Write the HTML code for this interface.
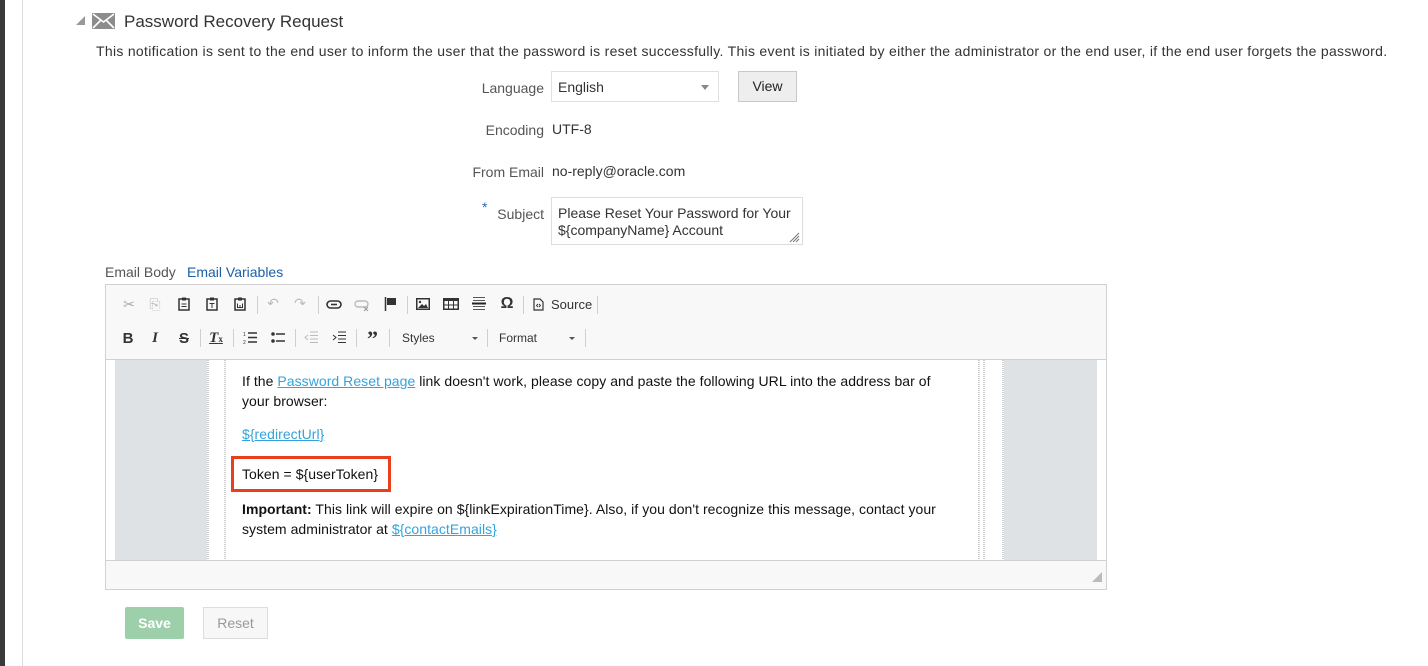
<!DOCTYPE html>
<html><head><style>
*{box-sizing:border-box;margin:0;padding:0}
body{width:1428px;height:666px;background:#fff;font-family:"Liberation Sans",Arial,sans-serif;color:#333;position:relative;overflow:hidden}
.a{position:absolute;white-space:nowrap}
.lbl{font-size:14px;color:#555;text-align:right;width:120px}
.val{font-size:14px;color:#333}
.ic{position:absolute;color:#333;font-size:14px;text-align:center;width:18px}
.sep{position:absolute;width:1px;height:18px;background:#d0d0d0}
.dl{position:absolute;width:2px;top:360px;height:200px;background-image:repeating-linear-gradient(#ccc 0 1px,#fff 1px 2px)}
.ct{position:absolute;font-size:14px;color:#111;left:242px;letter-spacing:0.05px}
.lk{color:#33a3dc;text-decoration:underline}
</style></head><body>
<div class="a" style="left:0;top:0;width:5px;height:666px;background:#3a3a3a"></div>
<div class="a" style="left:22px;top:0;width:1px;height:666px;background:#ddd"></div>
<div class="a" style="left:76px;top:16px;width:0;height:0;border-left:9px solid transparent;border-bottom:9px solid #999"></div>
<svg class="a" style="left:92px;top:13px" width="23" height="16" viewBox="0 0 23 16"><rect width="23" height="16" fill="#8c8c8c"/><path d="M1 1 L11.5 9 L22 1 M1 15 L8.5 7.5 M22 15 L14.5 7.5" stroke="#fff" stroke-width="1.6" fill="none"/></svg>
<div class="a" style="left:124px;top:12px;font-size:17px;color:#333">Password Recovery Request</div>
<div class="a" style="left:96px;top:43px;font-size:14px;color:#333;letter-spacing:0.3px">This notification is sent to the end user to inform the user that the password is reset successfully. This event is initiated by either the administrator or the end user, if the end user forgets the password.</div>

<div class="a lbl" style="left:424px;top:80px">Language</div>
<div class="a" style="left:551px;top:71px;width:168px;height:31px;border:1px solid #e0e0e0;background:#fff"></div>
<div class="a val" style="left:558px;top:79px">English</div>
<div class="a" style="left:701px;top:85px;border-left:4px solid transparent;border-right:4px solid transparent;border-top:5px solid #888"></div>
<div class="a" style="left:738px;top:71px;width:59px;height:31px;border:1px solid #c8c8c8;background:#eee;font-size:14px;color:#222;text-align:center;line-height:29px">View</div>
<div class="a lbl" style="left:424px;top:122px">Encoding</div>
<div class="a val" style="left:552px;top:121px">UTF-8</div>
<div class="a lbl" style="left:424px;top:164px">From Email</div>
<div class="a val" style="left:552px;top:163px">no-reply@oracle.com</div>
<div class="a" style="left:482px;top:199px;color:#2a6cc4;font-size:14px">*</div>
<div class="a lbl" style="left:424px;top:206px">Subject</div>
<div class="a" style="left:551px;top:197px;width:252px;height:48px;border:1px solid #ddd"></div>
<div class="a val" style="left:558px;top:205px;line-height:17px">Please Reset Your Password for Your<br>${companyName} Account</div>
<svg class="a" style="left:788px;top:231px" width="12" height="12"><path d="M11 2L2 11M11 5L5 11M11 8L8 11" stroke="#777" stroke-width="1"/></svg>

<div class="a" style="left:105px;top:264px;font-size:14px;color:#555">Email Body</div>
<div class="a" style="left:187px;top:264px;font-size:14px;color:#1a5fa8">Email Variables</div>

<div class="a" style="left:105px;top:284px;width:1002px;height:306px;border:1px solid #d1d1d1;background:#f8f8f8"></div>
<div class="a" style="left:106px;top:359px;width:1000px;height:1px;background:#d1d1d1"></div>
<div class="a" style="left:106px;top:360px;width:1000px;height:200px;background:#fff"></div>
<div class="a" style="left:106px;top:560px;width:1000px;height:1px;background:#d1d1d1"></div>
<div class="a" style="left:115px;top:360px;width:92px;height:200px;background:#dfe2e5"></div>
<div class="dl" style="left:207px"></div><div class="dl" style="left:224px"></div>
<div class="dl" style="left:978px"></div><div class="dl" style="left:983px"></div>
<div class="a" style="left:1004px;top:360px;width:93px;height:200px;background:#dfe2e5"></div>
<div class="dl" style="left:1002px"></div>
<svg class="a" style="left:1092px;top:572px" width="10" height="10"><path d="M10 0L10 10L0 10Z" fill="#bbb"/></svg>

<div class="ic" style="left:120px;top:296px;color:#aaa">✂</div>
<div class="ic" style="left:146px;top:296px;color:#bbb">⎘</div>
<svg class="a" style="left:178px;top:297px" width="12" height="14"><rect x="1" y="2" width="10" height="11" fill="none" stroke="#333" stroke-width="1.5"/><rect x="4" y="0.5" width="4" height="3" fill="#333"/><path d="M3.5 7h5M3.5 9.5h5" stroke="#333"/></svg>
<svg class="a" style="left:206px;top:297px" width="12" height="14"><rect x="1" y="2" width="10" height="11" fill="none" stroke="#333" stroke-width="1.5"/><rect x="4" y="0.5" width="4" height="3" fill="#333"/><path d="M3.5 6.5h5M6 6.5v4.5" stroke="#333"/></svg>
<svg class="a" style="left:234px;top:297px" width="12" height="14"><rect x="1" y="2" width="10" height="11" fill="none" stroke="#333" stroke-width="1.5"/><rect x="4" y="0.5" width="4" height="3" fill="#333"/><path d="M3.5 6.5v4h5v-4M6 8v2.5" stroke="#333" fill="none"/></svg>
<div class="sep" style="left:257px;top:296px"></div>
<div class="ic" style="left:264px;top:295px;color:#bbb">↶</div>
<div class="ic" style="left:291px;top:295px;color:#bbb">↷</div>
<div class="sep" style="left:318px;top:296px"></div>
<svg class="a" style="left:326px;top:300px" width="16" height="9"><rect x="1" y="1" width="14" height="7" rx="3.5" fill="none" stroke="#333" stroke-width="1.6"/><path d="M5 4.5h6" stroke="#333" stroke-width="1.6"/></svg>
<svg class="a" style="left:354px;top:300px" width="16" height="12"><rect x="1" y="1" width="13" height="6" rx="3" fill="none" stroke="#bbb" stroke-width="1.4"/><path d="M10 7l4 4M14 7l-4 4" stroke="#999"/></svg>
<svg class="a" style="left:384px;top:297px" width="13" height="14"><path d="M1.5 0v14" stroke="#333" stroke-width="1.5"/><path d="M3 1h9v7h-9z" fill="#333"/></svg>
<div class="sep" style="left:407px;top:296px"></div>
<svg class="a" style="left:416px;top:298px" width="14" height="12"><rect x="0.75" y="0.75" width="12.5" height="10.5" fill="none" stroke="#333" stroke-width="1.5"/><path d="M2 10l4-4 2 2 2-2 2 4z" fill="#333"/><circle cx="4" cy="4" r="1.2" fill="#333"/></svg>
<svg class="a" style="left:443px;top:298px" width="16" height="12"><rect x="0.75" y="0.75" width="14.5" height="10.5" fill="none" stroke="#333" stroke-width="1.5"/><rect x="0" y="0" width="16" height="3" fill="#333"/><path d="M5.5 3v8M10.5 3v8M1 7h14" stroke="#333"/></svg>
<svg class="a" style="left:472px;top:296px" width="14" height="16"><path d="M1 1.5h12M1 4.5h12M1 7.5h12M1 10.5h12M1 13.5h12" stroke="#555" stroke-width="1"/><path d="M0 7.5h14" stroke="#222" stroke-width="2"/></svg>
<div class="ic" style="left:498px;top:295px;font-size:16px;font-weight:bold">Ω</div>
<div class="sep" style="left:523px;top:296px"></div>
<svg class="a" style="left:533px;top:298px" width="11" height="13"><path d="M1 1h6l3 3v8H1z" fill="none" stroke="#333" stroke-width="1.2"/><path d="M5 6l-1.5 1.5L5 9M6 6l1.5 1.5L6 9" stroke="#333" fill="none" stroke-width="0.9"/></svg>
<div class="a" style="left:551px;top:297px;font-size:13px;color:#333">Source</div>
<div class="sep" style="left:597px;top:296px"></div>

<div class="ic" style="left:119px;top:330px;font-weight:bold;font-size:15px">B</div>
<div class="ic" style="left:146px;top:330px;font-weight:bold;font-style:italic;font-size:15px;font-family:'Liberation Serif',serif">I</div>
<div class="ic" style="left:175px;top:330px;font-weight:bold;font-size:15px;text-decoration:line-through">S</div>
<div class="sep" style="left:200px;top:329px"></div>
<div class="ic" style="left:207px;top:330px;font-style:italic;font-weight:bold;font-size:15px;text-decoration:underline;font-family:'Liberation Serif',serif">T<span style="font-size:9px;font-style:normal">x</span></div>
<div class="sep" style="left:233px;top:329px"></div>
<svg class="a" style="left:243px;top:331px" width="14" height="13"><path d="M5 2h9M5 6.5h9M5 11h9" stroke="#333" stroke-width="1.5"/><text x="0" y="5" font-size="5" fill="#333">1</text><text x="0" y="13" font-size="5" fill="#333">2</text></svg>
<svg class="a" style="left:271px;top:331px" width="14" height="13"><circle cx="2" cy="3" r="1.8" fill="#333"/><circle cx="2" cy="10" r="1.8" fill="#333"/><path d="M5 3h9M5 10h9" stroke="#333" stroke-width="1.5"/></svg>
<div class="sep" style="left:295px;top:329px"></div>
<svg class="a" style="left:304px;top:331px" width="14" height="13"><path d="M6 1h8M6 4.5h8M6 8h8M6 11.5h8" stroke="#bbb"/><path d="M4 4L1 6.5 4 9" stroke="#bbb" fill="none"/></svg>
<svg class="a" style="left:332px;top:331px" width="14" height="13"><path d="M6 1h8M6 4.5h8M6 8h8M6 11.5h8" stroke="#333"/><path d="M1 4l3 2.5L1 9" stroke="#333" fill="none"/></svg>
<div class="sep" style="left:356px;top:329px"></div>
<div class="ic" style="left:363px;top:326px;font-size:22px;font-weight:bold;font-family:'Liberation Serif',serif;letter-spacing:-1px">”</div>
<div class="sep" style="left:389px;top:329px"></div>
<div class="a" style="left:402px;top:331px;font-size:12px;color:#333">Styles</div>
<div class="a" style="left:472px;top:337px;border-left:3px solid transparent;border-right:3px solid transparent;border-top:3px solid #555"></div>
<div class="sep" style="left:487px;top:329px"></div>
<div class="a" style="left:499px;top:331px;font-size:12px;color:#333">Format</div>
<div class="a" style="left:569px;top:337px;border-left:3px solid transparent;border-right:3px solid transparent;border-top:3px solid #555"></div>
<div class="sep" style="left:585px;top:329px"></div>

<div class="ct" style="top:371px;line-height:20px">If the <span class="lk">Password Reset page</span> link doesn't work, please copy and paste the following URL into the address bar of<br>your browser:</div>
<div class="ct" style="top:426px"><span class="lk">${redirectUrl}</span></div>
<div class="a" style="left:231px;top:456px;width:160px;height:36px;border:3px solid #e8401c"></div>
<div class="ct" style="top:466px">Token = ${userToken}</div>
<div class="ct" style="top:499px;line-height:20px"><b>Important:</b> This link will expire on ${linkExpirationTime}. Also, if you don't recognize this message, contact your<br>system administrator at <span class="lk">${contactEmails}</span></div>

<div class="a" style="left:125px;top:607px;width:59px;height:32px;background:#9dcfab;color:#fff;font-size:14px;font-weight:bold;text-align:center;line-height:32px;border-radius:2px">Save</div>
<div class="a" style="left:203px;top:607px;width:65px;height:32px;background:#f7f7f7;border:1px solid #ddd;color:#999;font-size:14px;text-align:center;line-height:30px">Reset</div>
</body></html>
